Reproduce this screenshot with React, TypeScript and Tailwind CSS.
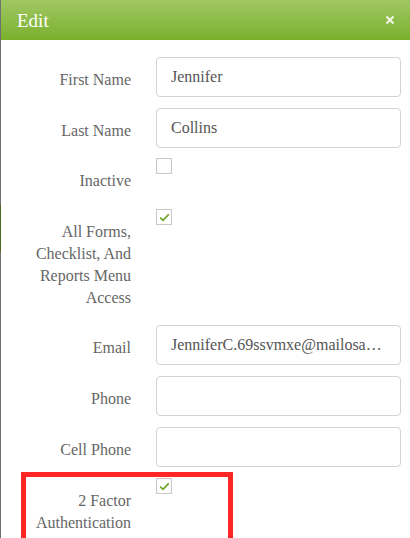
import React from "react";

const F = "[font-family:'Liberation_Serif','DejaVu_Serif',serif]";

function Label({ children }: { children: React.ReactNode }) {
  return (
    <div className="w-[130px] shrink-0 pt-3 text-right font-['Liberation_Serif'] text-[16px] leading-[22px] text-[#666]">
      <span className="font-['Liberation_Serif']">{children}</span>
    </div>
  );
}

function TextInput({ value }: { value?: string }) {
  return (
    <div className="ml-[25px] mr-[9px] flex h-[40px] w-[245px] shrink-0 items-center overflow-hidden rounded-[4px] border border-[#d2d2d2] bg-white pl-[14px] pr-[16px]">
      <span className="block min-w-0 truncate whitespace-nowrap font-['Liberation_Serif'] text-[16px] leading-[22px] text-[#555]">
        {value}
      </span>
    </div>
  );
}

function Check({ checked }: { checked?: boolean }) {
  return (
    <div className="ml-[25px]">
      <div className="flex h-[16px] w-[16px] items-center justify-center border border-[#c8c8c8] bg-white">
        {checked && (
          <svg width="11" height="9" viewBox="0 0 11 9">
            <path d="M1.2 4.6 L4 7.3 L9.8 1.4" fill="none" stroke="#72a62a" strokeWidth="1.8" />
          </svg>
        )}
      </div>
    </div>
  );
}

export default function App() {
  return (
    <div className={`relative flex h-[538px] w-[410px] overflow-hidden bg-white ${F}`}>
      <div className="flex w-px shrink-0 flex-col bg-[#707070]">
        <div className="h-[205px]" />
        <div className="h-[47px] bg-[#4b6b1c]" />
      </div>
      <div className="flex w-[409px] min-w-0 flex-col">
        <div className="flex h-10 items-center justify-between bg-gradient-to-b from-[#a0c862] to-[#7ab02a] pl-4 pr-[15px]">
          <span className="font-['Liberation_Serif'] text-[19px] leading-none text-white">Edit</span>
          <svg width="10" height="10" viewBox="0 0 10 10">
            <path d="M1.5 1.5 L8.5 8.5 M8.5 1.5 L1.5 8.5" stroke="#f2f7ea" strokeWidth="2" />
          </svg>
        </div>
        <div className="flex flex-col pt-[17px]">
          <div className="flex h-[51px]">
            <Label>First Name</Label>
            <TextInput value="Jennifer" />
          </div>
          <div className="flex h-[50px]">
            <Label>Last Name</Label>
            <TextInput value="Collins" />
          </div>
          <div className="flex h-[51px]">
            <Label>Inactive</Label>
            <Check />
          </div>
          <div className="flex h-[116px]">
            <Label>
              All Forms,
              <br />
              Checklist, And
              <br />
              Reports Menu
              <br />
              Access
            </Label>
            <Check checked />
          </div>
          <div className="flex h-[51px]">
            <Label>Email</Label>
            <TextInput value="JenniferC.69ssvmxe@mailosaur.net" />
          </div>
          <div className="flex h-[51px]">
            <Label>Phone</Label>
            <TextInput />
          </div>
          <div className="flex h-[51px]">
            <Label>Cell Phone</Label>
            <TextInput />
          </div>
          <div className="flex h-[60px]">
            <Label>
              2 Factor
              <br />
              Authentication
            </Label>
            <Check checked />
          </div>
        </div>
      </div>
      <div className="pointer-events-none absolute left-[21px] top-[472px] h-[80px] w-[212px] border-[5px] border-[#ff2626]" />
    </div>
  );
}
